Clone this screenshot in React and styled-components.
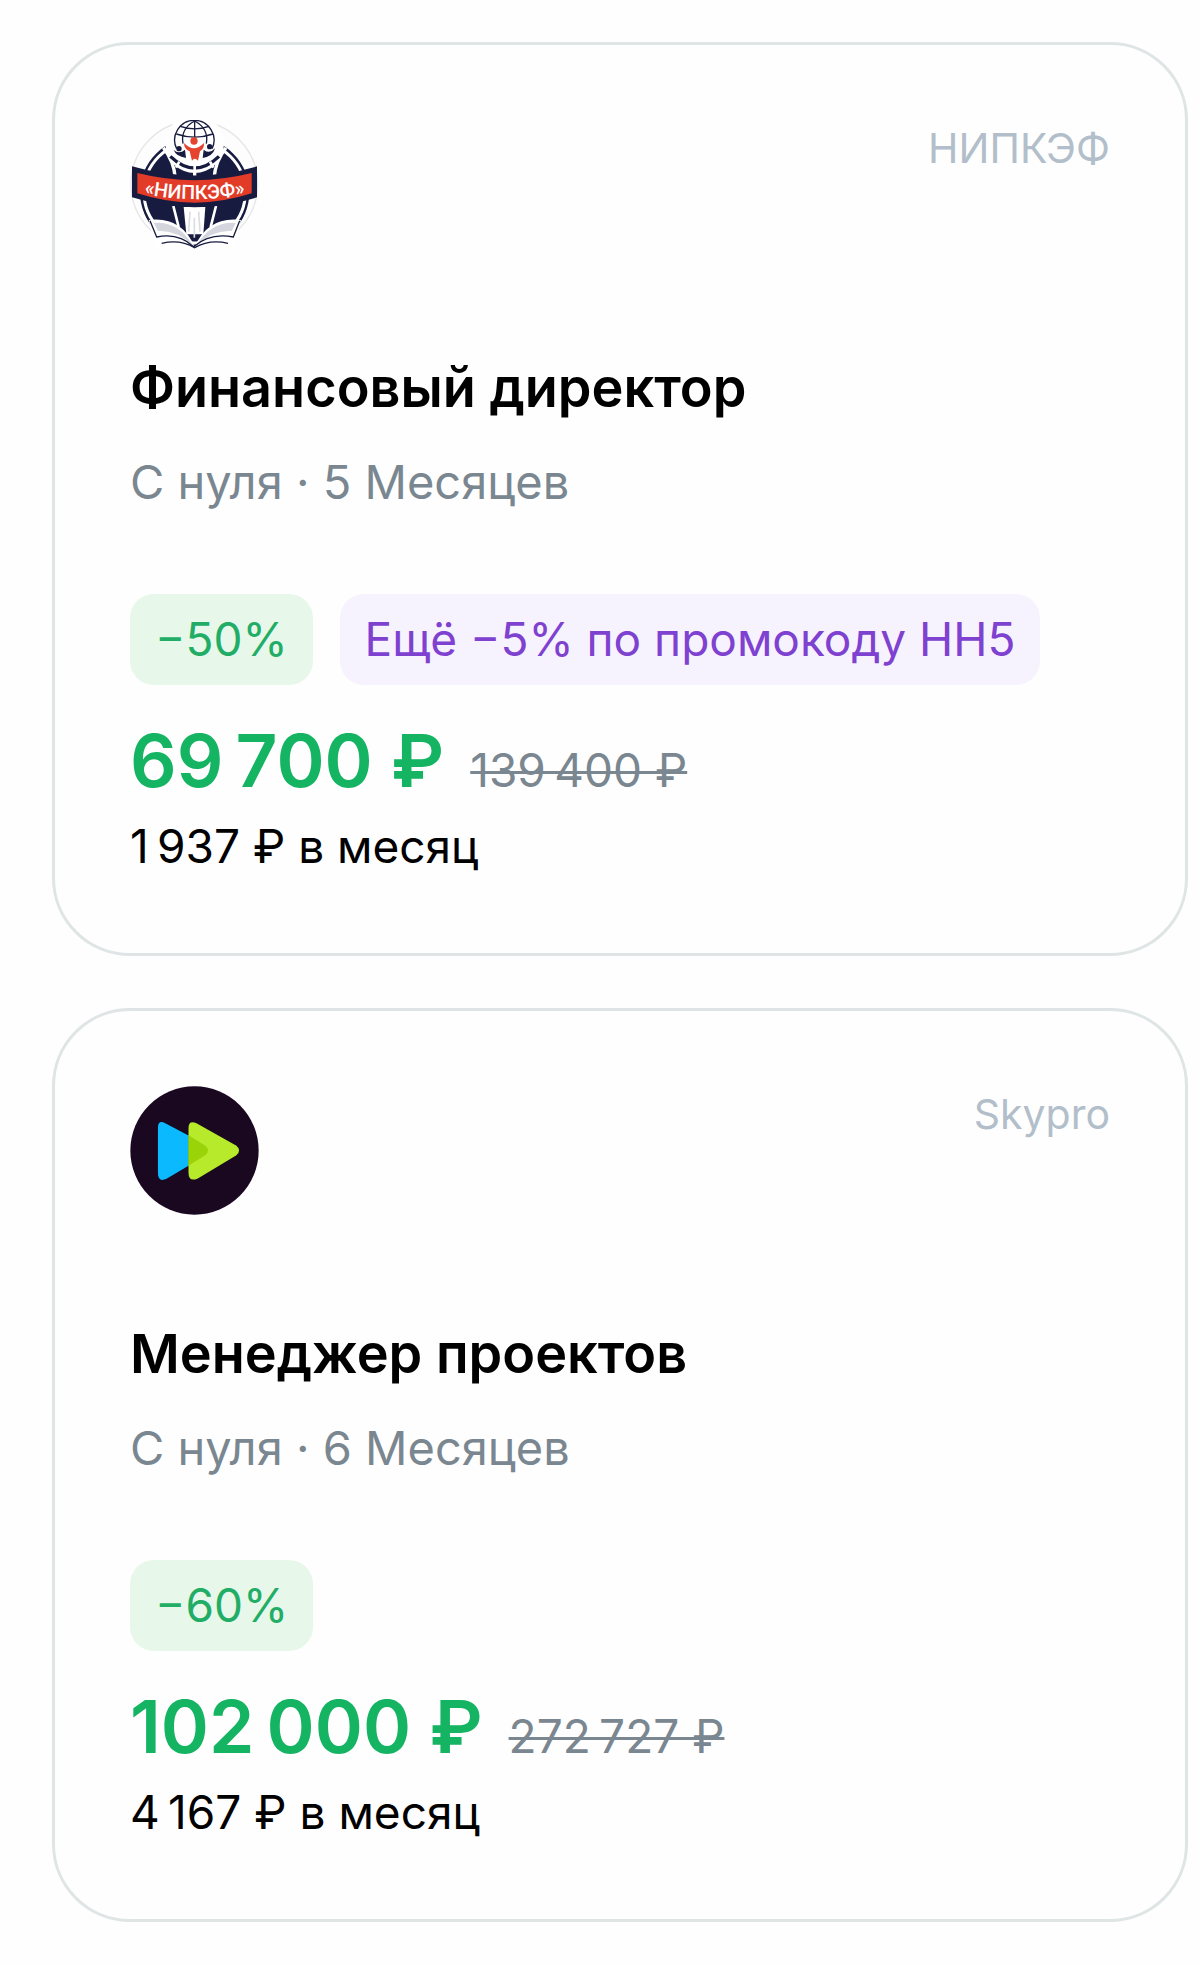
import React from 'react';
import styled, { createGlobalStyle } from 'styled-components';

const colors = {
  text: '#000',
  muted: '#7a8791',
  faint: '#b2bfca',
  border: '#dfe4e5',
  green: '#15b463',
};

const badgeTones = {
  green: { background: '#e7f8eb', color: '#22ad66' },
  purple: { background: '#f7f3fe', color: '#7f41d0' },
};

const GlobalStyle = createGlobalStyle`
  *, *::before, *::after {
    box-sizing: border-box;
  }

  body {
    margin: 0;
    background: #fefefe;
    color: ${colors.text};
    font-family: Inter, 'Liberation Sans', sans-serif;
  }
`;

const CourseList = styled.main`
  display: flex;
  flex-direction: column;
  gap: 52px;
  padding: 42px 12px 42px 52px;
`;

const Card = styled.article`
  padding: 75px;
  border: 3px solid ${colors.border};
  border-radius: 78px;
  background: #fefefe;
`;

const CardHeader = styled.header`
  display: flex;
  justify-content: space-between;
  margin-bottom: 104px;
`;

const Logo = styled.svg`
  display: block;
  width: 129px;
  height: 129px;
`;

const School = styled.span`
  font-size: 41px;
  line-height: 56px;
  color: ${colors.faint};
`;

const Title = styled.h2`
  margin: 0 0 27px;
  font-size: 54px;
  font-weight: 600;
  line-height: 70px;
`;

const Details = styled.p`
  margin: 0 0 80px;
  font-size: 47px;
  line-height: 64px;
  color: ${colors.muted};
`;

const Badges = styled.div`
  display: flex;
  flex-wrap: wrap;
  gap: 27px;
  margin-bottom: 32px;
`;

const Badge = styled.span`
  padding: 0 25px;
  border-radius: 24px;
  font-size: 46px;
  line-height: 91px;
  background: ${({ $tone }) => badgeTones[$tone].background};
  color: ${({ $tone }) => badgeTones[$tone].color};
`;

const Prices = styled.div`
  display: flex;
  align-items: baseline;
  gap: 26px;
  margin-bottom: 9px;
`;

const Price = styled.strong`
  font-size: 73px;
  font-weight: 600;
  line-height: 88px;
  color: ${colors.green};
`;

const OldPrice = styled.s`
  font-size: 46px;
  line-height: 64px;
  color: ${colors.muted};
  text-decoration-thickness: 3px;
`;

const Monthly = styled.p`
  margin: 0;
  font-size: 46px;
  line-height: 64px;
`;

function NipkefLogo() {
  return (
    <Logo viewBox="60 57 387 387" role="img" aria-label="НИПКЭФ">
      <defs>
        <clipPath id="globe">
          <circle cx="254" cy="274" r="164" />
        </clipPath>
        <path id="ribbon-text" d="M86 275 Q254 314 422 275" />
      </defs>
      <circle cx="253" cy="250" r="190" fill="#fdfdfd" stroke="#e6e6e8" strokeWidth="4" />
      <circle cx="254" cy="274" r="164" fill="#171b3f" />
      <g clipPath="url(#globe)" fill="none" stroke="#fff">
        <circle cx="254" cy="274" r="152" strokeWidth="9" />
        <path d="M160 140Q192 180 196 232M348 140Q316 180 312 232M254 190V240" strokeWidth="10" />
        <path d="M190 315L206 378M318 315L302 378" strokeWidth="8" />
      </g>
      <circle cx="254" cy="128" r="88" fill="#fff" />
      <path d="M181 166Q254 236 327 166" fill="none" stroke="#171b3f" strokeWidth="10" />
      <path d="M254 190V212M208 182L198 200M300 182L310 200" fill="none" stroke="#fff" strokeWidth="8" />
      <g fill="none" stroke="#171b3f" strokeWidth="4">
        <path d="M200 143A59 59 0 1 1 306 143" />
        <path d="M254 60V108M199 99Q254 118 309 99M211 76Q254 91 297 76" />
        <path d="M254 60Q211 83 219 128M254 60Q297 83 289 128" />
      </g>
      <circle cx="252" cy="120" r="11" fill="#e5442f" />
      <path d="M222 126Q238 142 252 142Q266 142 282 126Q283 143 270 151L264 179Q254 168 246 179L239 151Q222 144 222 126Z" fill="#e5442f" />
      <g fill="#171b3f">
        <circle cx="207" cy="143" r="8" />
        <circle cx="299" cy="137" r="8" />
        <path d="M191 147Q207 161 225 146L228 171Q198 166 191 147ZM315 142Q299 161 281 146L278 171Q309 166 315 142Z" />
      </g>

      <path d="M221 318H286L280 400H229Z" fill="#fff" />
      <path d="M116 357Q215 345 254 438Q294 345 393 357L372 442H136Z" fill="#fff" />
      <path d="M240 332L236 392M266 332L270 392M253 350V410" fill="none" stroke="#dcdde3" strokeWidth="5" />
      <path d="M132 366Q205 360 248 433Q200 386 144 390ZM377 366Q304 360 260 433Q309 386 365 390Z" fill="#d5d6dd" />
      <g fill="none" stroke="#171b3f" strokeWidth="4">
        <path d="M120 359L140 408Q205 394 251 437Q300 394 370 408L389 359" />
        <path d="M155 427Q210 414 254 440Q299 414 354 427" />
      </g>

      <path d="M66 196Q254 251 441 196V289Q254 348 66 289Z" fill="#171b3f" />
      <path d="M82 216Q254 259 425 216V277Q254 333 82 277Z" fill="#e23c28" />
      <text
        fill="#fff"
        fontFamily="Roboto, sans-serif"
        fontSize="59"
        fontWeight="500"
        textAnchor="middle"
      >
        <textPath href="#ribbon-text" startOffset="50%">«НИПКЭФ»</textPath>
      </text>
    </Logo>
  );
}

function SkyproLogo() {
  return (
    <Logo viewBox="60 48 388 388" role="img" aria-label="Skypro">
      <circle cx="254" cy="242" r="193" fill="#1a0720" />
      <path d="M144 174Q144 149 166 160L236 197V288L170 327Q144 339 144 309Z" fill="#0bb9ff" />
      <path d="M236 174Q236 150 260 160L379 227Q398 242 379 257L264 326Q236 338 236 309Z" fill="#b6ea2b" />
      <path d="M236 196L286 227Q304 242 286 256L236 288Z" fill="#9bd309" />
    </Logo>
  );
}

const courses = [
  {
    id: 'finance-director',
    logo: NipkefLogo,
    school: 'НИПКЭФ',
    title: 'Финансовый директор',
    details: 'С нуля · 5 Месяцев',
    discount: '−50%',
    promo: 'Ещё −5% по промокоду НН5',
    price: '69\u2009700 ₽',
    oldPrice: '139\u2009400 ₽',
    monthly: '1\u2009937 ₽ в месяц',
  },
  {
    id: 'project-manager',
    logo: SkyproLogo,
    school: 'Skypro',
    title: 'Менеджер проектов',
    details: 'С нуля · 6 Месяцев',
    discount: '−60%',
    price: '102\u2009000 ₽',
    oldPrice: '272\u2009727 ₽',
    monthly: '4\u2009167 ₽ в месяц',
  },
];

function CourseCard({ course }) {
  const { logo: SchoolLogo, school, title, details, discount, promo, price, oldPrice, monthly } = course;
  return (
    <Card>
      <CardHeader>
        <SchoolLogo />
        <School>{school}</School>
      </CardHeader>
      <Title>{title}</Title>
      <Details>{details}</Details>
      <Badges>
        <Badge $tone="green">{discount}</Badge>
        {promo && <Badge $tone="purple">{promo}</Badge>}
      </Badges>
      <Prices>
        <Price>{price}</Price>
        <OldPrice>{oldPrice}</OldPrice>
      </Prices>
      <Monthly>{monthly}</Monthly>
    </Card>
  );
}

function App() {
  return (
    <>
      <GlobalStyle />
      <CourseList>
        {courses.map((course) => (
          <CourseCard key={course.id} course={course} />
        ))}
      </CourseList>
    </>
  );
}

export default App;
